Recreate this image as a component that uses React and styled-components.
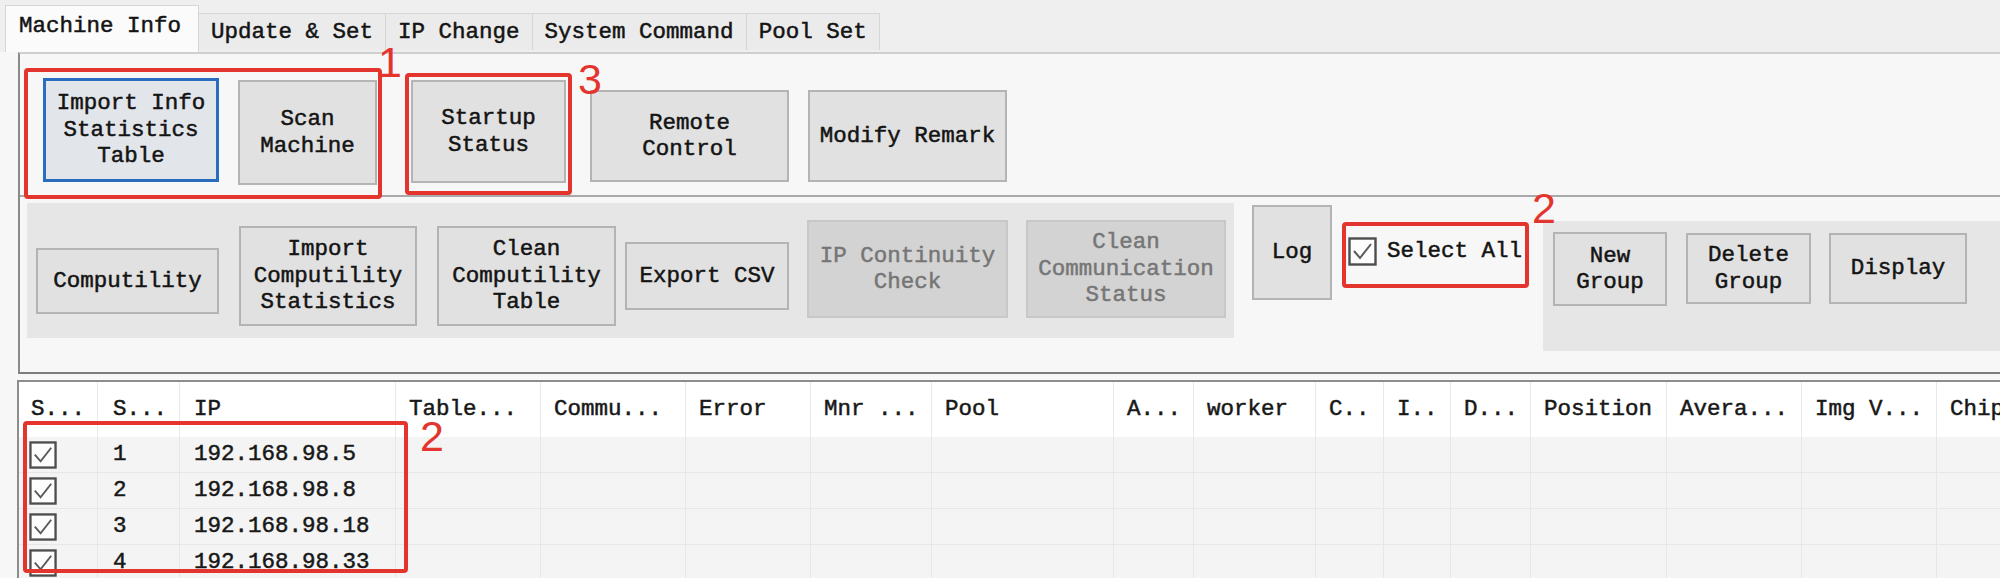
import React from 'react';
import styled, { createGlobalStyle } from 'styled-components';

const RED = '#e3352d';

const GlobalStyle = createGlobalStyle`
  html, body {
    margin: 0;
    padding: 0;
    background: #f7f7f7;
  }
  body {
    width: 2000px;
    height: 578px;
    overflow: hidden;
  }
`;

const Page = styled.div`
  width: 2000px;
  height: 578px;
  overflow: hidden;
  background: #f7f7f7;
  color: #141414;
  font-family: "Liberation Mono", "DejaVu Sans Mono", monospace;
  font-size: 22.5px;
  line-height: 26.5px;
  -webkit-text-stroke-width: 0.5px;
`;

const TabStrip = styled.div`
  display: flex;
  align-items: flex-end;
  height: 52px;
  box-sizing: border-box;
  padding-left: 5px;
  background: #efefef;
`;

const Tab = styled.div`
  flex: none;
  box-sizing: border-box;
  display: flex;
  align-items: center;
  height: ${p => (p.$active ? 47 : 37)}px;
  margin-bottom: ${p => (p.$active ? 0 : 2)}px;
  padding: ${p => (p.$active ? '0 17px 6px 13px' : '0 12px')};
  background: ${p => (p.$active ? '#fbfbfb' : '#ebebeb')};
  border: 1px solid #d6d6d6;
  border-bottom: none;
  border-left: ${p => (p.$active ? '1px solid #d6d6d6' : 'none')};
  white-space: nowrap;
`;

const Frame = styled.div`
  margin: 0 -40px 0 18px;
  background: #f7f7f7;
  border-top: 2px solid #cfcfcf;
  border-left: 2px solid #8a8a8a;
  border-bottom: 2px solid #7c7c7c;
`;

const TopBar = styled.div`
  display: flex;
  align-items: flex-start;
  height: 141px;
  border-bottom: 2px solid #a9a9a9;
`;

const BottomBar = styled.div`
  display: flex;
  align-items: flex-start;
  height: 175px;
`;

const Panel = styled.div`
  flex: ${p => (p.$w ? 'none' : '1')};
  display: flex;
  align-items: flex-start;
  width: ${p => (p.$w ? `${p.$w}px` : 'auto')};
  height: ${p => p.$h}px;
  margin: ${p => p.$mt}px 0 0 ${p => p.$ml}px;
  background: #e6e6e6;
`;

const Button = styled.div`
  flex: none;
  box-sizing: border-box;
  display: flex;
  align-items: center;
  justify-content: center;
  text-align: center;
  white-space: pre-line;
  width: ${p => p.$w}px;
  height: ${p => p.$h}px;
  margin: ${p => p.$mt || 0}px 0 0 ${p => p.$ml || 0}px;
  background: ${p => (p.$disabled ? '#d3d3d3' : p.$focused ? '#e2e5e9' : '#e1e1e1')};
  border: ${p =>
    p.$focused ? '3px solid #2a6cbd' : p.$disabled ? '2px solid #c8c8c8' : '2px solid #b4b4b4'};
  color: ${p => (p.$disabled ? '#767676' : '#141414')};
`;

const Callout = styled.div`
  position: relative;
  z-index: 2;
  flex: none;
  box-sizing: border-box;
  display: flex;
  align-items: flex-start;
  width: ${p => p.$w}px;
  height: ${p => p.$h}px;
  margin: ${p => p.$mt || 0}px 0 0 ${p => p.$ml || 0}px;
  border: 4px solid ${RED};
  border-radius: 4px;
`;

const OverlayCallout = styled(Callout)`
  position: absolute;
  left: ${p => p.$x}px;
  top: ${p => p.$y}px;
  margin: 0;
`;

const Tag = styled.span`
  position: absolute;
  left: calc(100% + ${p => p.$dx}px);
  top: ${p => p.$dy}px;
  font-family: "Liberation Sans", Arial, sans-serif;
  font-size: 43px;
  line-height: 1;
  color: ${RED};
  -webkit-text-stroke-width: 0;
`;

const CheckRow = styled.label`
  display: flex;
  align-items: center;
  gap: 10px;
  margin: 11px 0 0 2px;
  white-space: nowrap;
`;

const Box = styled.svg`
  flex: none;
  display: block;
`;

const Table = styled.div`
  position: relative;
  margin: 6px 0 0 17px;
  border-top: 2px solid #8d8d8d;
  border-left: 2px solid #8d8d8d;
`;

const HeadRow = styled.div`
  display: flex;
  height: 55px;
  background: #ffffff;
`;

const Row = styled.div`
  display: flex;
  box-sizing: border-box;
  height: 36px;
  background: #f4f4f4;
  border-bottom: 1px solid #e7e7e7;
`;

const Cell = styled.div`
  flex: none;
  box-sizing: border-box;
  display: flex;
  align-items: center;
  width: ${p => p.$w}px;
  padding-left: ${p => p.$pad || 13}px;
  border-right: 1px solid ${p => (p.$head ? '#e9e9e9' : '#e7e7e7')};
  white-space: nowrap;
  overflow: hidden;
  color: #181818;
`;

const CheckBox = ({ size = 29 }) => (
  <Box width={size} height={size} viewBox="0 0 29 29">
    <rect x="1.5" y="1.5" width="26" height="26" fill="#fdfdfd" stroke="#4d4d4d" strokeWidth="2.4" />
    <polyline points="6,14 12,21 23,7" fill="none" stroke="#5a5a5a" strokeWidth="2" />
  </Box>
);

const tabs = ['Machine Info', 'Update & Set', 'IP Change', 'System Command', 'Pool Set'];

const columns = [
  { label: 'S...', w: 79, pad: 12 },
  { label: 'S...', w: 82, pad: 15 },
  { label: 'IP', w: 216, pad: 14 },
  { label: 'Table...', w: 145 },
  { label: 'Commu...', w: 145 },
  { label: 'Error', w: 125 },
  { label: 'Mnr ...', w: 121 },
  { label: 'Pool', w: 182 },
  { label: 'A...', w: 80 },
  { label: 'worker', w: 122 },
  { label: 'C..', w: 68 },
  { label: 'I..', w: 67 },
  { label: 'D...', w: 80 },
  { label: 'Position', w: 136 },
  { label: 'Avera...', w: 135 },
  { label: 'Img V...', w: 135 },
  { label: 'Chip', w: 160 }
];

const machines = [
  { n: 1, ip: '192.168.98.5' },
  { n: 2, ip: '192.168.98.8' },
  { n: 3, ip: '192.168.98.18' },
  { n: 4, ip: '192.168.98.33' }
];

const cellText = (m, i) => {
  if (i === 0) return <CheckBox size={28} />;
  if (i === 1) return m.n;
  if (i === 2) return m.ip;
  return null;
};

export default function App() {
  return (
    <Page>
      <GlobalStyle />
      <TabStrip>
        {tabs.map((t, i) => (
          <Tab key={t} $active={i === 0}>
            {t}
          </Tab>
        ))}
      </TabStrip>

      <Frame>
        <TopBar>
          <Callout $ml={4} $mt={14} $w={358} $h={131}>
            <Button $focused $ml={15} $mt={6} $w={176} $h={104}>
              {'Import Info\nStatistics\nTable'}
            </Button>
            <Button $ml={19} $mt={8} $w={139} $h={105}>
              {'Scan\nMachine'}
            </Button>
            <Tag $dx={0} $dy={-31}>1</Tag>
          </Callout>
          <Callout $ml={23} $mt={19} $w={167} $h={122}>
            <Button $ml={2} $mt={3} $w={155} $h={103}>
              {'Startup\nStatus'}
            </Button>
            <Tag $dx={10} $dy={-19}>3</Tag>
          </Callout>
          <Button $ml={18} $mt={36} $w={199} $h={92}>
            {'Remote\nControl'}
          </Button>
          <Button $ml={19} $mt={36} $w={199} $h={92}>
            Modify Remark
          </Button>
        </TopBar>

        <BottomBar>
          <Panel $ml={7} $mt={6} $w={1207} $h={135}>
            <Button $ml={9} $mt={45} $w={183} $h={66}>
              Computility
            </Button>
            <Button $ml={20} $mt={23} $w={178} $h={100}>
              {'Import\nComputility\nStatistics'}
            </Button>
            <Button $ml={20} $mt={23} $w={179} $h={100}>
              {'Clean\nComputility\nTable'}
            </Button>
            <Button $ml={9} $mt={39} $w={164} $h={68}>
              Export CSV
            </Button>
            <Button $disabled $ml={18} $mt={17} $w={201} $h={98}>
              {'IP Continuity\nCheck'}
            </Button>
            <Button $disabled $ml={18} $mt={17} $w={200} $h={98}>
              {'Clean\nCommunication\nStatus'}
            </Button>
          </Panel>
          <Button $ml={18} $mt={8} $w={80} $h={95}>
            Log
          </Button>
          <Callout $ml={10} $mt={25} $w={187} $h={66}>
            <CheckRow>
              <CheckBox />
              Select All
            </CheckRow>
            <Tag $dx={7} $dy={-39}>2</Tag>
          </Callout>
          <Panel $ml={14} $mt={24} $h={130}>
            <Button $ml={10} $mt={11} $w={114} $h={74}>
              {'New\nGroup'}
            </Button>
            <Button $ml={19} $mt={12} $w={125} $h={71}>
              {'Delete\nGroup'}
            </Button>
            <Button $ml={18} $mt={12} $w={138} $h={71}>
              Display
            </Button>
          </Panel>
        </BottomBar>
      </Frame>

      <Table>
        <HeadRow>
          {columns.map((c, i) => (
            <Cell key={i} $head $w={c.w} $pad={c.pad}>
              {c.label}
            </Cell>
          ))}
        </HeadRow>
        {machines.map(m => (
          <Row key={m.n}>
            {columns.map((c, i) => (
              <Cell key={i} $w={c.w} $pad={i === 0 ? 10 : c.pad}>
                {cellText(m, i)}
              </Cell>
            ))}
          </Row>
        ))}
        <OverlayCallout $x={4} $y={39} $w={385} $h={152}>
          <Tag $dx={16} $dy={-10}>2</Tag>
        </OverlayCallout>
      </Table>
    </Page>
  );
}
